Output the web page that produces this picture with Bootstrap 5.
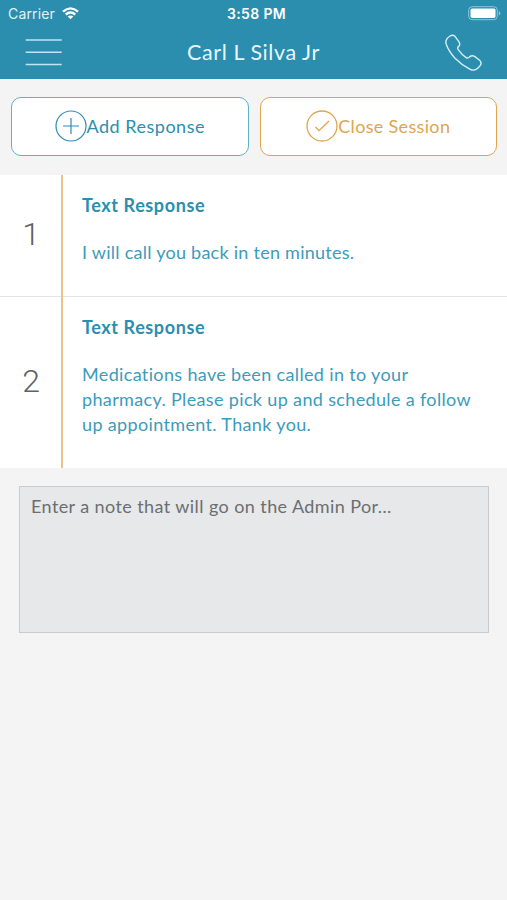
<!DOCTYPE html>
<html lang="en">
<head>
<meta charset="utf-8">
<meta name="viewport" content="width=device-width, initial-scale=1">
<title>Carl L Silva Jr</title>
<link href="https://cdn.jsdelivr.net/npm/bootstrap@5.3.0/dist/css/bootstrap.min.css" rel="stylesheet">
<style>
  :root { --teal: #2b8eaf; --amber: #dea550; }
  body { background: #f4f4f4; font-family: Lato, "Open Sans", sans-serif; font-size: 18px; line-height: 25px; min-height: 900px; overflow-x: hidden; }
  svg { display: block; flex: none; }
  .app-top { background: var(--teal); height: 79px; color: #fff; }
  .status-row { height: 27px; font-family: Inter, sans-serif; font-size: 14px; line-height: 27px; padding: 0 6px 0 8px; }
  .carrier { letter-spacing: .15px; color: #e2f2f7; }
  .clock { font-weight: 600; font-size: 14px; letter-spacing: .35px; padding-left: 4px; }
  .title-row { height: 52px; padding: 0 25px; }
  .title-text { font-size: 21.5px; line-height: 48px; font-weight: 400; color: #e6f6fb; letter-spacing: .57px; padding-bottom: 3px; }
  .side { flex: 1 1 0; }
  .icon-btn { background: none; border: 0; padding: 0; color: inherit; }
  .menu-btn { padding-bottom: 3px; }
  .actions { height: 96px; padding: 18px 10px 0 11px; gap: 11px; }
  .action { height: 59px; border: 1.5px solid; border-radius: 10px; background: #fff !important; padding: 0; font-size: 18px; }
  .action-teal { color: var(--teal); border-color: #5eb1cb; letter-spacing: .5px; }
  .action-amber { color: var(--amber); border-color: var(--amber); letter-spacing: .33px; }
  .action svg { margin-top: -2px; }
  .entry { background: #fff; }
  .entry + .entry { border-top: 1px solid #e4e4e4; }
  .entry + .entry .entry-body { margin-top: -1px; padding-top: 19px; }
  .entry-no { width: 61px; padding: 0 0 3px 1px; font-family: Roboto, sans-serif; font-size: 32px; font-weight: 300; color: #606264; }
  .entry-body { border-left: 2px solid #eac388; padding: 18px 20px 0 19px; color: #3d9bba; }
  .entry-title { font-size: 18px; line-height: 25px; font-weight: 700; color: var(--teal); letter-spacing: .6px; margin-bottom: 22px; }
  .entry-text { letter-spacing: .35px; }
  .entry-short { letter-spacing: .26px; }
  .note-box { margin: 18px 18px 0 19px; height: 147px; background: #e6e8ea; border: 1.5px solid #c9ccce; padding: 7px 11px; color: #6c6e70; letter-spacing: .41px; }
  .ln { display: block; white-space: nowrap; width: max-content; }
</style>
</head>
<body>
<header class="app-top">
  <div class="status-row d-flex align-items-center">
    <div class="side d-flex align-items-center">
      <span class="carrier">Carrier</span>
      <svg style="margin-left:7px" width="17" height="13" viewBox="0 0 17 13" fill="none" stroke="#fff" stroke-width="2.300"><path d="M1 4.600Q8.500-1.900 16 4.600M3.700 7.500Q8.500 3.500 13.300 7.500"/><path d="M8.500 12.300L5.700 9.500Q8.500 7.400 11.300 9.500Z" fill="#fff" stroke="none"/></svg>
    </div>
    <span class="clock">3:58 PM</span>
    <div class="side d-flex justify-content-end">
      <svg width="33" height="15" viewBox="0 0 33 15"><rect x=".7" y=".7" width="28.600" height="13" rx="3.500" fill="none" stroke="#8fc5d8"/><rect x="2.500" y="2.500" width="25" height="9.500" rx="1.700" fill="#fff"/><path d="M30.800 5q1.500.7 1.500 2.200t-1.500 2.200z" fill="#8fc5d8"/></svg>
    </div>
  </div>
  <div class="title-row d-flex align-items-center justify-content-between">
    <button class="icon-btn menu-btn side" aria-label="Menu"><svg width="37" height="28" viewBox="0 0 37 28" stroke="#c0e6f3" stroke-width="1.500"><path d="M.7 2h36M.7 14.300h36M.7 26.500h36"/></svg></button>
    <h1 class="title-text m-0"><span class="ln">Carl L Silva Jr</span></h1>
    <button class="icon-btn side d-flex justify-content-end" aria-label="Call"><svg width="38" height="38" viewBox="0 0 38 38" fill="none" stroke="#d3eff8" stroke-width="1.400" stroke-linejoin="round"><path d="M2.200 6.300Q3.200 3.800 6 2Q8.500.2 11 2.300L15 7.800Q16.500 10 14.800 12.300Q13 13.500 14 15.300Q17.800 20.800 22.500 23.800Q24.200 24.500 25.500 22.900Q28 20.800 30.600 22.400L35.600 26.300Q38 28.500 36.500 31.200Q34.700 33.800 32.500 35.200Q29.500 37 26.200 35.300Q17.800 31.200 11 24.200Q4.800 17.200 2.300 10.400Q1.500 8 2.200 6.300Z"/></svg></button>
  </div>
</header>
<main>
  <div class="actions d-flex">
    <button class="btn action action-teal flex-fill w-50 d-flex align-items-center justify-content-center">
      <svg width="32" height="32" viewBox="0 0 32 32" fill="none" stroke="currentColor" stroke-width="1.200"><circle cx="16" cy="16" r="15"/><path d="M8 16h16M16 8v16"/></svg><span class="ln">Add Response</span>
    </button>
    <button class="btn action action-amber flex-fill w-50 d-flex align-items-center justify-content-center">
      <svg width="32" height="32" viewBox="0 0 32 32" fill="none" stroke="currentColor" stroke-width="1.300"><circle cx="16" cy="16" r="15"/><path d="M9.500 17l3.600 3.700L23 11"/></svg><span class="ln">Close Session</span>
    </button>
  </div>
  <section>
    <article class="entry d-flex" style="height:121px">
      <div class="entry-no d-flex align-items-center justify-content-center">1</div>
      <div class="entry-body flex-fill">
        <h2 class="entry-title"><span class="ln">Text Response</span></h2>
        <p class="entry-short m-0"><span class="ln">I will call you back in ten minutes.</span></p>
      </div>
    </article>
    <article class="entry d-flex" style="height:172px">
      <div class="entry-no d-flex align-items-center justify-content-center">2</div>
      <div class="entry-body flex-fill">
        <h2 class="entry-title"><span class="ln">Text Response</span></h2>
        <p class="entry-text m-0"><span class="ln">Medications have been called in to your</span><span class="ln">pharmacy. Please pick up and schedule a follow</span><span class="ln">up appointment. Thank you.</span></p>
      </div>
    </article>
  </section>
  <div class="note-box"><span class="ln">Enter a note that will go on the Admin Por…</span></div>
</main>
<script src="https://cdn.jsdelivr.net/npm/bootstrap@5.3.0/dist/js/bootstrap.bundle.min.js"></script>
</body>
</html>
